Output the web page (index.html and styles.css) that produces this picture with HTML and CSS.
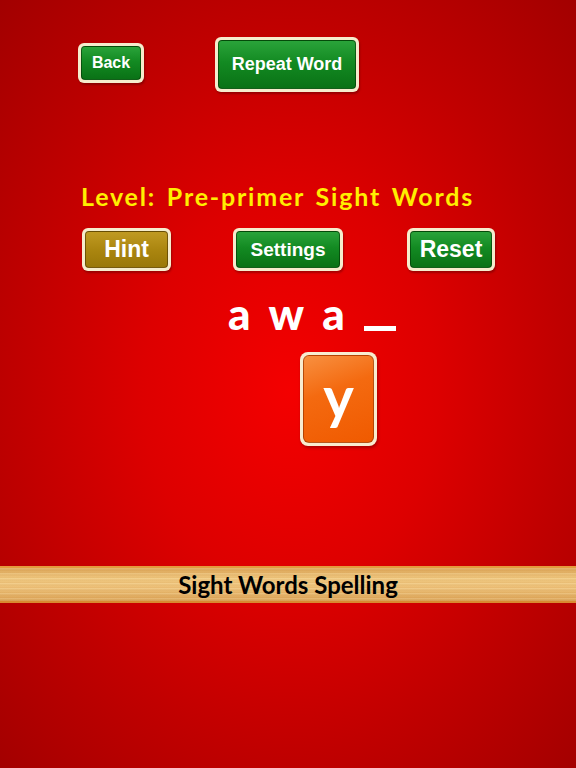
FILE: index.html
```html
<!DOCTYPE html>
<html>
<head>
<meta charset="utf-8">
<link rel="stylesheet" href="styles.css">
</head>
<body>
<div class="screen">
  <div class="top-row">
    <div class="btn btn-back"><span class="inner green">Back</span></div>
    <div class="btn btn-repeat"><span class="inner green">Repeat Word</span></div>
  </div>
  <div class="level">Level: Pre-primer Sight Words</div>
  <div class="mid-row">
    <div class="btn btn-hint"><span class="inner gold">Hint</span></div>
    <div class="btn btn-settings"><span class="inner green">Settings</span></div>
    <div class="btn btn-reset"><span class="inner green">Reset</span></div>
  </div>
  <div class="word">
    <span class="ch">a</span><span class="ch">w</span><span class="ch">a</span><span class="blank"></span>
  </div>
  <div class="tiles">
    <div class="tile"><span class="tile-in">y</span></div>
  </div>
  <div class="wood">Sight Words Spelling</div>
</div>
</body>
</html>
```
FILE: styles.css
```css
html, body {
  margin: 0;
  padding: 0;
}
body {
  width: 576px;
  height: 768px;
  overflow: hidden;
}
.screen {
  width: 576px;
  height: 768px;
  background: radial-gradient(ellipse 420px 560px at 290px 390px, #f40000 0%, #dd0000 35%, #c00000 65%, #a00000 100%);
  display: flex;
  flex-direction: column;
  font-family: "Liberation Sans", Arial, sans-serif;
}
.top-row {
  display: flex;
  align-items: flex-start;
  padding-top: 37px;
  height: 54px;
}
.btn {
  box-sizing: border-box;
  background: #f6eccd;
  border-radius: 6px;
  padding: 3px;
  display: flex;
  box-shadow: 1px 2px 2px rgba(60,0,0,0.35);
}
.inner {
  flex: 1;
  display: flex;
  align-items: center;
  justify-content: center;
  border-radius: 4px;
  color: #fff;
  font-weight: bold;
  border: 1px solid rgba(0,40,0,0.55);
}
.green {
  background: linear-gradient(#2aa33a 0%, #138a22 45%, #0a7216 100%);
}
.gold {
  background: linear-gradient(#c09a22 0%, #ab8610 50%, #9a7808 100%);
  border-color: rgba(70,50,0,0.6);
}
.btn-back {
  width: 66px;
  height: 40px;
  margin-left: 78px;
  margin-top: 6px;
  font-size: 16px;
}
.btn-repeat {
  width: 144px;
  height: 55px;
  margin-left: 71px;
  font-size: 18px;
}
.level {
  margin-top: 90px;
  margin-left: 81px;
  height: 30px;
  line-height: 30px;
  color: #ffee00;
  font-family: "Lato", sans-serif;
  font-weight: bold;
  font-size: 25px;
  letter-spacing: 1.8px;
  word-spacing: 3px;
}
.mid-row {
  display: flex;
  margin-top: 17px;
  height: 43px;
}
.btn-hint {
  width: 89px;
  height: 43px;
  margin-left: 82px;
  font-size: 23px;
}
.btn-settings {
  width: 110px;
  height: 43px;
  margin-left: 62px;
  font-size: 19px;
}
.btn-reset {
  width: 88px;
  height: 43px;
  margin-left: 64px;
  font-size: 23px;
}
.word {
  display: flex;
  align-items: flex-start;
  margin-top: 20px;
  margin-left: 228px;
  height: 46px;
  color: #fff;
  font-family: "Lato", sans-serif;
  font-weight: 900;
  font-size: 44px;
  line-height: 44px;
}
.ch {
  margin-right: 18px;
}
.blank {
  width: 32px;
  height: 5px;
  margin-top: 35px;
  margin-left: 1px;
  background: #fff;
}
.tiles {
  display: flex;
  margin-top: 15px;
  margin-left: 300px;
}
.tile {
  box-sizing: border-box;
  width: 77px;
  height: 94px;
  background: #f8ecd0;
  border-radius: 8px;
  padding: 3px;
  display: flex;
  box-shadow: 1px 2px 3px rgba(60,0,0,0.35);
}
.tile-in {
  flex: 1;
  border-radius: 6px;
  border: 1px solid rgba(120,40,0,0.5);
  background: linear-gradient(160deg, #f89040 0%, #f46a10 40%, #f05a00 100%);
  color: #fff;
  display: flex;
  align-items: center;
  justify-content: center;
  font-family: "Lato", sans-serif;
  font-weight: bold;
  font-size: 58px;
  padding-bottom: 8px;
}
.wood {
  margin-top: 120px;
  height: 37px;
  box-sizing: border-box;
  border-top: 2px solid #e49a3c;
  border-bottom: 2px solid #d98a30;
  background:
    repeating-linear-gradient(180deg, rgba(255,240,200,0.18) 0px, rgba(255,240,200,0.18) 1px, rgba(150,90,20,0.10) 2px, rgba(0,0,0,0) 3px, rgba(180,110,30,0.12) 5px),
    linear-gradient(#dca456 0%, #f0c880 30%, #eec27a 60%, #dca458 100%);
  text-align: center;
  color: #000;
  font-family: "Lato", sans-serif;
  font-weight: bold;
  font-size: 24px;
  line-height: 33px;
}
```
